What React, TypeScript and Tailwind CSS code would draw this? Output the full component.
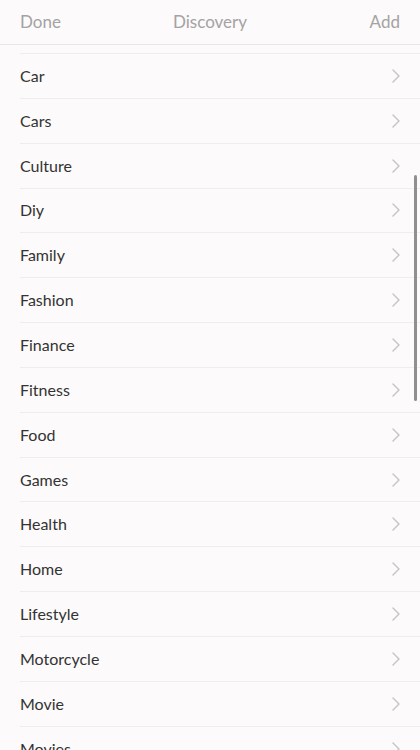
const CATEGORIES = [
  "Car",
  "Cars",
  "Culture",
  "Diy",
  "Family",
  "Fashion",
  "Finance",
  "Fitness",
  "Food",
  "Games",
  "Health",
  "Home",
  "Lifestyle",
  "Motorcycle",
  "Movie",
  "Movies",
];

function Chevron() {
  return (
    <svg width="8" height="14" viewBox="0 0 8 14" fill="none" className="shrink-0">
      <path d="M1 1l6 6-6 6" stroke="#c4c4c4" strokeWidth="1.4" strokeLinecap="round" strokeLinejoin="round" />
    </svg>
  );
}

export default function App() {
  return (
    <div className="relative h-[750px] w-[420px] overflow-hidden bg-[#fcfafa] font-['Lato',sans-serif]">
      <header className="grid h-[45px] grid-cols-3 items-center border-b border-[#e8e6e6] px-5 text-[17px] text-[#a3a3a3]">
        <span>Done</span>
        <span className="text-center">Discovery</span>
        <span className="text-right">Add</span>
      </header>

      <ul className="mt-[8px] ml-5 border-t border-[#efeded]">
        {CATEGORIES.map((name) => (
          <li
            key={name}
            className="flex h-[44.85px] items-center justify-between border-b border-[#efeded] pr-5 text-[16px] text-[#333333]"
          >
            <span>{name}</span>
            <Chevron />
          </li>
        ))}
      </ul>

      {/* scroll indicator */}
      <div className="absolute top-[175px] right-[3px] h-[226px] w-[3px] rounded-full bg-[#8f8f8f]" />
    </div>
  );
}
